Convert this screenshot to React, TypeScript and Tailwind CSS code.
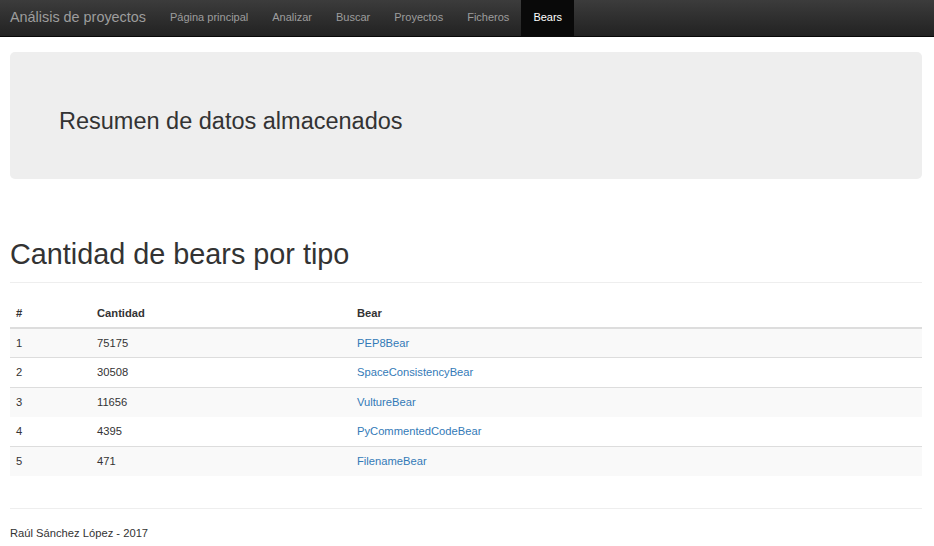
const links = ["Página principal", "Analizar", "Buscar", "Proyectos", "Ficheros", "Bears"];

const rows = [
    {n: 1, cantidad: 75175, bear: "PEP8Bear"},
    {n: 2, cantidad: 30508, bear: "SpaceConsistencyBear"},
    {n: 3, cantidad: 11656, bear: "VultureBear"},
    {n: 4, cantidad: 4395, bear: "PyCommentedCodeBear"},
    {n: 5, cantidad: 471, bear: "FilenameBear"},
];

export default function App() {
    return (
        <div className="min-h-[546px] bg-white text-[#333] font-['Liberation_Sans',Arial,sans-serif]">
            {/* Navbar */}
            <nav className="h-[37px] flex items-stretch bg-gradient-to-b from-[#3c3c3c] to-[#222] border-b border-[#080808]">
                <span className="flex items-center pl-[10px] pr-[12px] pb-[1px] text-[14.4px] text-[#9d9d9d]">
                    Análisis de proyectos
                </span>
                <ul className="flex items-stretch">
                    {links.map((l) => (
                        <li
                            key={l}
                            className={
                                l === "Bears"
                                    ? "flex items-center px-[12px] pb-[1px] text-[11px] text-white bg-[#090909]"
                                    : "flex items-center px-[12px] pb-[1px] text-[11px] text-[#9d9d9d]"
                            }
                        >
                            {l}
                        </li>
                    ))}
                </ul>
            </nav>

            <div className="pl-[10px] pr-[12px] pt-[15px]">
                {/* Jumbotron */}
                <div className="h-[127px] rounded-[5px] bg-[#eee] flex items-center pl-[49px] pt-[12px]">
                    <h2 className="text-[23.5px] leading-none text-[#333]">Resumen de datos almacenados</h2>
                </div>

                {/* Page header */}
                <div className="mt-[58px] pb-[11px] border-b border-[#eee]">
                    <h1 className="text-[28.8px] leading-[34px] text-[#333]">Cantidad de bears por tipo</h1>
                </div>

                {/* Table */}
                <table className="mt-[17px] w-full border-collapse text-[11.2px]">
                    <thead>
                        <tr className="border-b-2 border-[#ddd]">
                            <th className="w-[81px] px-[6px] pt-[6px] pb-[7px] text-left font-bold leading-[14px]">#</th>
                            <th className="w-[260px] px-[6px] pt-[6px] pb-[7px] text-left font-bold leading-[14px]">Cantidad</th>
                            <th className="px-[6px] pt-[6px] pb-[7px] text-left font-bold leading-[14px]">Bear</th>
                        </tr>
                    </thead>
                    <tbody>
                        {rows.map((r) => (
                            <tr
                                key={r.n}
                                className={
                                    (r.n % 2 === 1 ? "bg-[#f9f9f9] " : "bg-white ") +
                                    (r.n === 4 || r.n === 1 ? "" : "border-t border-[#ddd]")
                                }
                            >
                                <td className="h-[29.5px] px-[6px] leading-[14px]">{r.n}</td>
                                <td className="h-[29.5px] px-[6px] leading-[14px]">{r.cantidad}</td>
                                <td className="h-[29.5px] px-[6px] leading-[14px] text-[#337ab7]">{r.bear}</td>
                            </tr>
                        ))}
                    </tbody>
                </table>

                {/* Footer */}
                <hr className="mt-[32px] border-t border-[#eee]" />
                <p className="pt-[16px] text-[11.2px] leading-[16px]">Raúl Sánchez López - 2017</p>
            </div>
        </div>
    );
}
